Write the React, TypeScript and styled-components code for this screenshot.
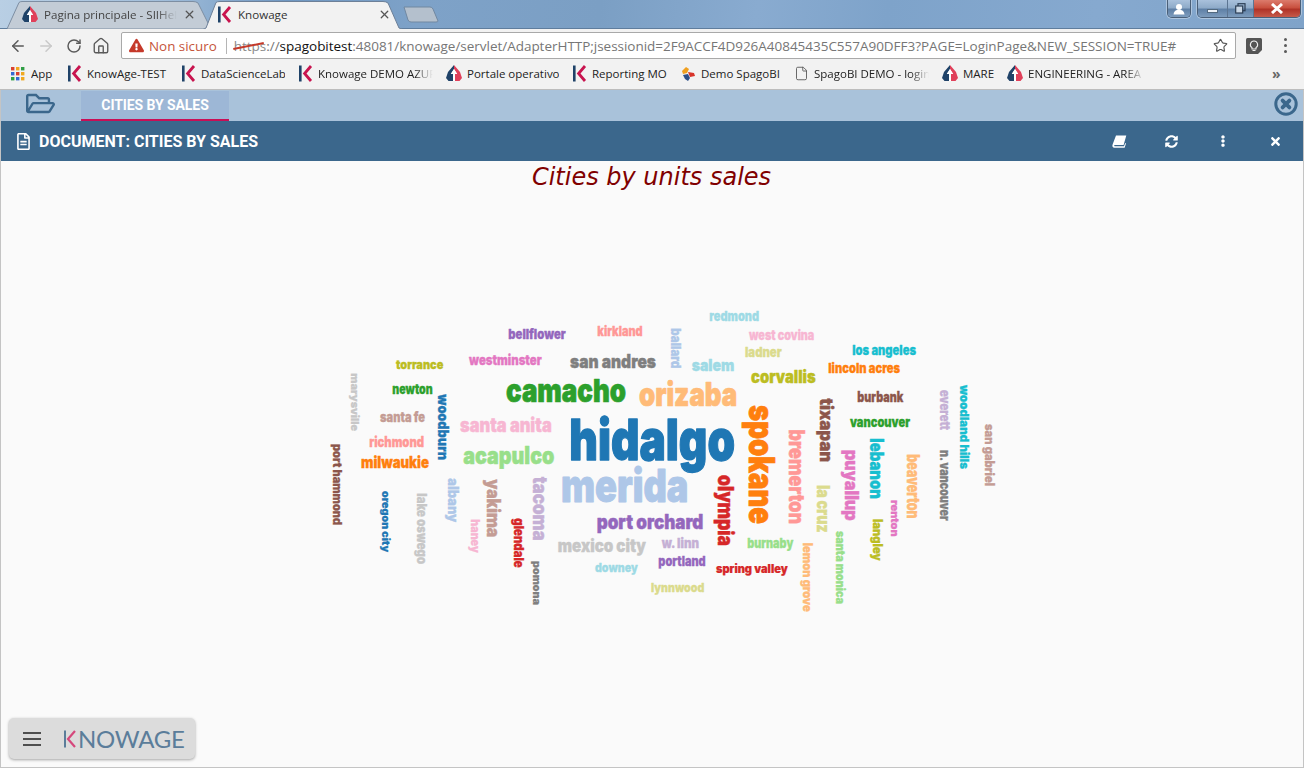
import React from "react";
import styled, { createGlobalStyle } from "styled-components";
import { ArrowLeft, ArrowRight, RotateCw, Home, Star, File as FileIcon, X } from "lucide-react";
import { FaRegFolderOpen, FaRegFileAlt, FaSyncAlt, FaEllipsisV, FaTimes, FaExclamationTriangle } from "react-icons/fa";

const Global = createGlobalStyle`
  html, body { margin: 0; padding: 0; background: #fafafa; overflow: hidden; }
  body { font-family: "Open Sans", "Liberation Sans", sans-serif; }
  * { box-sizing: border-box; }
`;

const Page = styled.div`
  width: 1304px; height: 768px; display: flex; flex-direction: column; overflow: hidden;
`;

/* ---------- browser chrome ---------- */
const TabStrip = styled.div`
  height: 29px; flex: none; display: flex; align-items: flex-end; padding-left: 7px; position: relative;
  background: linear-gradient(97deg, #b9cfe4 0%, #a3bfdb 12%, #6f97c1 22%, #7ea2c8 32%, #7b9fc4 46%, #89abd0 58%, #7ea3ca 68%, #86a9cf 84%, #7fa3c9 100%);
  border-bottom: 1px solid #5f7d9d;
`;
const TabShell = styled.div<{ $w: number; $active?: boolean }>`
  width: ${p => p.$w}px; height: 28px; position: relative; display: flex; align-items: center;
  padding: ${p => (p.$active ? "0 12px 1px 14px" : "0 19px 1px 15px")}; gap: 6px; flex: none; margin-bottom: -1px;
  margin-left: ${p => (p.$active ? "-12px" : "0")};
  font-size: 12px; color: ${p => (p.$active ? "#333" : "#444")};
  z-index: ${p => (p.$active ? 2 : 1)};
`;
const TabShape = styled.svg`
  position: absolute; inset: 0; width: 100%; height: 100%; z-index: -1;
`;
const TabTitle = styled.span<{ $fade?: boolean }>`
  flex: 1; white-space: nowrap; overflow: hidden; font-family: "Open Sans", sans-serif; font-size: 11.6px;
  ${p => p.$fade && "mask-image: linear-gradient(90deg, #000 85%, transparent 100%);"}
`;
const NewTab = styled.svg`
  width: 36px; height: 17px; flex: none; margin: 0 0 5px 0;
`;
const WindowControls = styled.div`
  position: absolute; top: 0; right: 3px; display: flex; gap: 6px; align-items: flex-start;
`;
const CtrlGroup = styled.div`
  display: flex; height: 18px; border: 1px solid #4a5f78; border-top: none; border-radius: 0 0 5px 5px; overflow: hidden;
  box-shadow: 0 0 0 1px rgba(255,255,255,.35);
`;
const Ctrl = styled.div<{ $w: number; $red?: boolean }>`
  width: ${p => p.$w}px; display: flex; align-items: center; justify-content: center;
  background: ${p => p.$red
    ? "linear-gradient(#dc7b6c 0%, #c9503f 45%, #b03327 55%, #c65a4a 100%)"
    : "linear-gradient(#a9c1dc 0%, #8fabc9 45%, #5f80a6 55%, #7d9cbd 100%)"};
  & + & { border-left: 1px solid #5c7592; }
`;
const MinBar = styled.div`
  width: 11px; height: 4px; margin-top: 5px; background: #eef3f8; border: 1px solid #52697f;
`;

const Toolbar = styled.div`
  height: 31px; flex: none; background: #f2f2f2; display: flex; align-items: center; padding: 2px 0 0 8px;
`;
const NavBtn = styled.div<{ $w: number }>`
  width: ${p => p.$w}px; display: flex; align-items: center; justify-content: center; flex: none;
`;
const UrlBox = styled.div`
  width: 1115px; height: 27px; margin-left: 2px; flex: none; background: #fff; border: 1px solid #a9a9a9; border-radius: 2px;
  display: flex; align-items: center; padding: 0 7px; font-size: 13.5px; color: #767676; white-space: nowrap;
`;
const NotSecure = styled.span`
  color: #c5553a; margin-left: 5px; font-size: 13.4px; font-family: "Open Sans", sans-serif;
`;
const UrlSep = styled.span`
  width: 1px; height: 16px; background: #b5b5b5; margin: 0 7px 0 9px; flex: none;
`;
const Https = styled.span`
  position: relative; color: #8a8a8a;
  &::after {
    content: ""; position: absolute; left: -1px; right: 2px; top: 8px; height: 1.5px; background: #c5392a; transform: rotate(-11deg);
  }
`;
const UrlText = styled.span`
  flex: 1; font-family: "Open Sans", sans-serif; letter-spacing: -0.025px;
`;
const Host = styled.span`
  color: #111;
`;
const ExtIcon = styled.svg`
  width: 16px; height: 16px; margin-left: 10px; flex: none;
`;
const MenuDots = styled.div`
  display: flex; flex-direction: column; gap: 3px; margin-left: 22px;
`;
const Dot = styled.span`
  width: 3px; height: 3px; border-radius: 50%; background: #5a5a5a;
`;

const Bookmarks = styled.div`
  height: 30px; flex: none; background: #f2f2f2; display: flex; align-items: center; padding: 0 0 2px 11px;
  border-bottom: 1px solid #bdbdbd;
  font-family: "Open Sans", sans-serif; font-size: 11.5px; color: #222;
`;
const Bookmark = styled.div<{ $w: number }>`
  width: ${p => p.$w}px; flex: none; display: flex; align-items: center; gap: 5px; padding-right: 13px; overflow: hidden; white-space: nowrap;
`;
const BookmarkLabel = styled.span<{ $fade?: boolean }>`
  flex: 1; overflow: hidden;
  ${p => p.$fade && "mask-image: linear-gradient(90deg, #000 84%, transparent 100%);"}
`;
const Chevrons = styled.span`
  margin-left: 115px; color: #666; font-size: 14px; font-weight: 700; line-height: 1;
`;

/* ---------- application ---------- */
const AppFrame = styled.div`
  flex: 1; display: flex; flex-direction: column; border-left: 1px solid #c4c4c4; border-right: 1px solid #c4c4c4;
  border-bottom: 1px solid #c4c4c4; position: relative; min-height: 0;
`;
const DocTabs = styled.div`
  height: 31px; flex: none; background: #a9c2da; display: flex; padding-top: 1px; align-items: stretch;
`;
const FolderBtn = styled.div`
  width: 80px; flex: none; display: flex; align-items: flex-start; padding: 0 0 0 25px; color: #3b678c;
`;
const DocTab = styled.div`
  width: 148px; flex: none; background: #9db7d6; border-bottom: 2px solid #c90f56; color: #fff;
  font-family: Roboto, sans-serif; font-weight: 700; font-size: 14px; letter-spacing: -0.08px;
  display: flex; align-items: center; justify-content: center; padding-bottom: 1px;
`;
const CloseAll = styled.svg`
  width: 24px; height: 24px; margin: 1px 5px 0 auto; flex: none;
`;
const DocHeader = styled.div`
  height: 40px; flex: none; background: #3b678c; color: #fff; display: flex; align-items: center; padding: 0 2px 0 14px;
`;
const DocTitle = styled.div`
  font-family: Roboto, sans-serif; font-weight: 700; font-size: 16px; margin-left: 7px; letter-spacing: 0; white-space: nowrap;
`;
const HeaderActions = styled.div`
  margin-left: auto; display: flex; align-items: center;
`;
const HeaderBtn = styled.div`
  width: 52px; display: flex; justify-content: center; align-items: center; color: #fff;
`;
const Content = styled.div`
  flex: 1; background: #fafafa; display: flex; flex-direction: column; min-height: 0;
`;
const ChartTitle = styled.div`
  height: 32px; flex: none; text-align: center; color: #800000; padding: 0 1px 0 0;
  font-family: "DejaVu Sans", Verdana, sans-serif; font-style: italic; font-size: 24px; line-height: 33px;
`;
const Cloud = styled.svg`
  display: block; width: 1302px; height: 574px; flex: none;
`;
const WordText = styled.text<{ $size: number; $color: string }>`
  font-family: Inter, "Liberation Sans", Arial, sans-serif; font-weight: 900;
  font-size: ${p => p.$size}px; fill: ${p => p.$color}; stroke: ${p => p.$color};
  stroke-width: ${p => p.$size * 0.022}px; stroke-linejoin: round;
`;
const FloatMenu = styled.div`
  position: absolute; left: 8px; bottom: 8px; width: 186px; height: 41px; background: #dcdcdc; border-radius: 5px;
  box-shadow: 0 1px 3px rgba(0,0,0,.35); display: flex; align-items: center; padding: 1px 0 0 14px;
`;
const Burger = styled.div`
  width: 18px; display: flex; flex-direction: column; gap: 3.6px; flex: none;
`;
const BurgerBar = styled.span`
  height: 2px; background: #4f4f4f; display: block;
`;
const BrandMark = styled.svg`
  width: 14px; height: 18px; margin-left: 22px; flex: none;
`;
const BrandText = styled.span`
  font-family: Lato, sans-serif; font-size: 24px; font-weight: 400; color: #5b7d9a; letter-spacing: -0.3px; line-height: 1; margin-left: 1px;
`;

/* ---------- small drawings ---------- */
const KLogo = ({ size = 15 }: { size?: number }) => (
  <svg width={size} height={size + 2} viewBox="0 0 15 17" style={{ flex: "none" }}>
    <rect x="1" y="0.5" width="2.6" height="16" fill="#1f4268" />
    <path d="M13 1 L6.6 8.5 L13 16" fill="none" stroke="#c8144f" strokeWidth="2.8" />
  </svg>
);
const ArrowLogo = () => (
  <svg width="16" height="17" viewBox="0 0 16 17" style={{ flex: "none" }}>
    <path d="M8 0 L2 7 L0 13 L2.5 16 L7 16 L7 9 L4.8 9 L8 4 Z" fill="#1f4268" />
    <path d="M8 0 L14 7 L16 13 L13.5 16 L9 16 L9 9 L11.2 9 L8 4 Z" fill="#e0405a" />
    <path d="M8 4 L11.2 9 L9 9 L9 16 L7 16 L7 9 L4.8 9 Z" fill="#fff" />
  </svg>
);
const SpagoLogo = () => (
  <svg width="16" height="16" viewBox="0 0 16 16" style={{ flex: "none" }}>
    <path d="M6 1 L9 3 L7 7 L3 8 L2 5 Z" fill="#f0a020" />
    <path d="M8 6 L14 7 L15 10 L10 11 Z" fill="#d8342a" />
    <path d="M3 9 L8 8 L10 12 L8 15 L5 13 Z" fill="#2d4f8a" />
  </svg>
);
const AppsGrid = () => {
  const c = ["#d9402f", "#f0a81e", "#2f9e44", "#3569d4", "#d9402f", "#f0a81e", "#2f9e44", "#3569d4", "#f0a81e"];
  return (
    <svg width="15" height="14" viewBox="0 0 15 14" style={{ flex: "none" }}>
      {c.map((f, i) => (
        <rect key={i} x={(i % 3) * 5} y={Math.floor(i / 3) * 5} width="3.4" height="3.4" fill={f} />
      ))}
    </svg>
  );
};
const BookIcon = () => (
  <svg width="15" height="13" viewBox="0 0 15 13">
    <path d="M4 0.5 L14.3 0.5 L11.6 10 L2.8 10 C2 10 1.8 11.3 2.8 11.3 L12 11.3 L13.2 8 L14 8.6 L12.6 12.7 L2.4 12.7 C0.6 12.7 0 11 0.6 9.5 Z" fill="#fff" />
  </svg>
);

type W = [string, number, number, number, number, string];
/* horizontal: text, left, right, baseline, ascender height, colour */
const H: W[] = [
  ["bellflower", 508.3, 565.7, 338.7, 10, "#9467bd"],
  ["kirkland", 597.3, 642.7, 336, 10, "#ff9896"],
  ["westminster", 469, 541.7, 365, 10.5, "#e377c2"],
  ["san andres", 570, 656, 367.7, 14, "#7f7f7f"],
  ["torrance", 396, 443.3, 369.3, 9.5, "#bcbd22"],
  ["camacho", 506, 626, 401.7, 24, "#2ca02c"],
  ["newton", 392.3, 432.7, 394.3, 10, "#2ca02c"],
  ["santa fe", 380, 425, 421.7, 10, "#c49c94"],
  ["santa anita", 460, 551.7, 431.7, 14.5, "#f7b6d2"],
  ["richmond", 369.3, 424, 446.7, 10.7, "#ff9896"],
  ["milwaukie", 361, 429, 468.3, 11.7, "#ff7f0e"],
  ["acapulco", 463.3, 554.3, 464.3, 18, "#98df8a"],
  ["hidalgo", 569.3, 735, 460, 43, "#1f77b4"],
  ["merida", 561, 688.3, 502.3, 34, "#aec7e8"],
  ["port orchard", 596.7, 703.3, 528.5, 15, "#9467bd"],
  ["mexico city", 557.7, 646, 552, 13, "#c7c7c7"],
  ["downey", 595, 637.7, 572, 9, "#9edae5"],
  ["w. linn", 661.7, 699, 547.7, 10, "#c5b0d5"],
  ["portland", 658.3, 705.7, 566, 10, "#9467bd"],
  ["lynnwood", 651, 704.3, 592, 9, "#dbdb8d"],
  ["spring valley", 716, 787.7, 573.3, 8.5, "#d62728"],
  ["burnaby", 747.3, 793.3, 548.3, 10, "#98df8a"],
  ["orizaba", 639, 737.3, 406, 25, "#ffbb78"],
  ["redmond", 709.3, 759, 321, 10, "#9edae5"],
  ["west covina", 749, 814.3, 340, 10, "#f7b6d2"],
  ["ladner", 745, 781.7, 357.3, 10, "#dbdb8d"],
  ["salem", 691.7, 734.3, 370.7, 12.5, "#9edae5"],
  ["corvallis", 751, 815.7, 383.3, 12.7, "#bcbd22"],
  ["los angeles", 852.3, 916, 355, 10, "#17becf"],
  ["lincoln acres", 828.3, 900, 372.7, 10, "#ff7f0e"],
  ["burbank", 857.3, 903.3, 401.7, 10.7, "#8c564b"],
  ["vancouver", 850, 910, 426.7, 10, "#2ca02c"],
];
/* vertical: text, baseline x, top, bottom, ascender height, colour */
const V: W[] = [
  ["marysville", 350.7, 373.3, 431, 8, "#c7c7c7"],
  ["woodburn", 438.3, 394.3, 460, 11, "#1f77b4"],
  ["port hammond", 333, 444, 525, 8.7, "#8c564b"],
  ["oregon city", 382, 491, 552.3, 7.5, "#1f77b4"],
  ["lake oswego", 417, 493.3, 564, 9.8, "#c7c7c7"],
  ["albany", 448, 478.3, 522.3, 11, "#aec7e8"],
  ["haney", 470.5, 519.3, 552.7, 9, "#f7b6d2"],
  ["yakima", 487, 479.3, 537.3, 14, "#c49c94"],
  ["tacoma", 533, 476.7, 540.7, 14.5, "#c5b0d5"],
  ["glendale", 514, 518.3, 567.7, 10, "#d62728"],
  ["pomona", 532.5, 561, 605, 7.5, "#7f7f7f"],
  ["ballard", 671, 328.3, 368.3, 10, "#aec7e8"],
  ["spokane", 749.3, 405, 524, 26.7, "#ff7f0e"],
  ["tixapan", 820, 398.3, 462.3, 14, "#8c564b"],
  ["bremerton", 789.3, 429.3, 524, 16.2, "#ff9896"],
  ["olympia", 718, 475, 546, 16, "#d62728"],
  ["la cruz", 817, 485, 532.7, 13.5, "#dbdb8d"],
  ["puyallup", 845, 450, 520.7, 14, "#e377c2"],
  ["lebanon", 870, 438.3, 499, 14, "#17becf"],
  ["beaverton", 907.3, 454.3, 518.7, 12.7, "#ffbb78"],
  ["renton", 891, 500, 536.7, 8.3, "#e377c2"],
  ["langley", 873, 519, 560.7, 9.7, "#bcbd22"],
  ["santa monica", 836, 531, 604, 9.2, "#98df8a"],
  ["lemon grove", 802.5, 542.7, 611.7, 9.5, "#ffbb78"],
  ["n. vancouver", 939.5, 450, 520.7, 9.8, "#7f7f7f"],
  ["everett", 939.5, 390, 430, 9.8, "#c5b0d5"],
  ["woodland hills", 959.5, 385, 469, 9.2, "#17becf"],
  ["san gabriel", 984.5, 424, 486, 9.7, "#c49c94"],
];

const Word = ({ w, vertical }: { w: W; vertical?: boolean }) => {
  const [text, a, b, c, asc, color] = w;
  const size = asc / 0.756;
  const len = vertical ? c - b : b - a;
  const transform = vertical ? `translate(${a} ${b}) rotate(90)` : `translate(${a} ${c})`;
  return (
    <WordText $size={size} $color={color} transform={transform} textLength={len} lengthAdjust="spacingAndGlyphs">
      {text}
    </WordText>
  );
};

const bookmarks: { w: number; icon: React.ReactNode; label: string; fade?: boolean }[] = [
  { w: 56, icon: <AppsGrid />, label: "App" },
  { w: 114, icon: <KLogo />, label: "KnowAge-TEST" },
  { w: 117, icon: <KLogo />, label: "DataScienceLab" },
  { w: 148, icon: <KLogo />, label: "Knowage DEMO AZURE", fade: true },
  { w: 126, icon: <ArrowLogo />, label: "Portale operativo" },
  { w: 108, icon: <KLogo />, label: "Reporting MO" },
  { w: 114, icon: <SpagoLogo />, label: "Demo SpagoBI" },
  { w: 148, icon: <FileIcon size={15} color="#555" strokeWidth={1.4} />, label: "SpagoBI DEMO - login", fade: true },
  { w: 65, icon: <ArrowLogo />, label: "MARE" },
  { w: 150, icon: <ArrowLogo />, label: "ENGINEERING - AREA SVILUPPO", fade: true },
];

export default function App() {
  return (
    <Page>
      <Global />
      <TabStrip>
        <TabShell $w={208}>
          <TabShape viewBox="0 0 208 28" preserveAspectRatio="none">
            <path d="M0 28 L12 1.5 Q13 0.5 15 0.5 L186 0.5 Q189 0.5 191 2 L204 28 Z" fill="#c3ccd6" stroke="#7d8ea2" />
          </TabShape>
          <ArrowLogo />
          <TabTitle $fade>Pagina principale - SIIHelp</TabTitle>
          <X size={13} strokeWidth={2.4} color="#555" />
        </TabShell>
        <TabShell $w={200} $active>
          <TabShape viewBox="0 0 200 28" preserveAspectRatio="none">
            <path d="M0 28.5 L3 27 L13 1.5 Q14 0.5 17 0.5 L180 0.5 Q183 0.5 185 2 L196 27 L200 28.5 Z" fill="#f2f2f2" stroke="#6d8098" />
          </TabShape>
          <KLogo />
          <TabTitle>Knowage</TabTitle>
          <X size={13} strokeWidth={2.4} color="#555" />
        </TabShell>
        <NewTab viewBox="0 0 36 17">
          <path d="M1 1 L27 1 Q29 1 30 3 L35 15 Q35 16 33 16 L8 16 Q6 16 5 14 Z" fill="#b4c0cd" stroke="#7188a1" />
        </NewTab>
        <WindowControls>
          <CtrlGroup>
            <Ctrl $w={22}>
              <svg width="12" height="12" viewBox="0 0 12 12"><circle cx="6" cy="4" r="3" fill="#fff" /><path d="M0.5 11.5 Q1 7.5 4 7 L8 7 Q11 7.5 11.5 11.5 Z" fill="#fff" /></svg>
            </Ctrl>
          </CtrlGroup>
          <CtrlGroup>
            <Ctrl $w={29}><MinBar /></Ctrl>
            <Ctrl $w={26}>
              <svg width="11" height="11" viewBox="0 0 11 11"><rect x="3" y="0.7" width="7" height="7" fill="none" stroke="#2d3f55" strokeWidth="1.2" /><rect x="0.7" y="3" width="7" height="7" fill="#c9d7e6" stroke="#2d3f55" strokeWidth="1.2" /></svg>
            </Ctrl>
            <Ctrl $w={47} $red>
              <svg width="14" height="11" viewBox="0 0 14 11"><path d="M2 1 L12 10 M12 1 L2 10" stroke="#fff" strokeWidth="3" /></svg>
            </Ctrl>
          </CtrlGroup>
        </WindowControls>
      </TabStrip>

      <Toolbar>
        <NavBtn $w={19}><ArrowLeft size={18} color="#5a5a5a" strokeWidth={2} /></NavBtn>
        <NavBtn $w={38}><ArrowRight size={18} color="#c9c9c9" strokeWidth={2} /></NavBtn>
        <NavBtn $w={18}><RotateCw size={16} color="#5a5a5a" strokeWidth={2.2} /></NavBtn>
        <NavBtn $w={36}><Home size={18} color="#5a5a5a" strokeWidth={1.8} /></NavBtn>
        <UrlBox>
          <FaExclamationTriangle size={15} color="#c5392a" />
          <NotSecure>Non sicuro</NotSecure>
          <UrlSep />
          <UrlText>
            <Https>https</Https>://<Host>spagobitest</Host>:48081/knowage/servlet/AdapterHTTP;jsessionid=2F9ACCF4D926A40845435C557A90DFF3?PAGE=LoginPage&amp;NEW_SESSION=TRUE#
          </UrlText>
          <Star size={15} color="#555" strokeWidth={1.8} />
        </UrlBox>
        <ExtIcon viewBox="0 0 16 16">
          <path d="M0 1.5 Q0 0 1.5 0 L14.5 0 Q16 0 16 1.5 L16 12 L12 16 L1.5 16 Q0 16 0 14.5 Z" fill="#555" />
          <path d="M8 3 A3.6 3.6 0 0 1 10 9.6 L10 11 L6 11 L6 9.6 A3.6 3.6 0 0 1 8 3 Z M6.5 12.5 L9.5 12.5" fill="none" stroke="#f0f0f0" strokeWidth="1.1" />
        </ExtIcon>
        <MenuDots><Dot /><Dot /><Dot /></MenuDots>
      </Toolbar>

      <Bookmarks>
        {bookmarks.map(b => (
          <Bookmark key={b.label} $w={b.w}>
            {b.icon}
            <BookmarkLabel $fade={b.fade}>{b.label}</BookmarkLabel>
          </Bookmark>
        ))}
        <Chevrons>»</Chevrons>
      </Bookmarks>

      <AppFrame>
        <DocTabs>
          <FolderBtn><FaRegFolderOpen size={29} style={{ marginTop: -2 }} /></FolderBtn>
          <DocTab>CITIES BY SALES</DocTab>
          <CloseAll viewBox="0 0 24 24">
            <circle cx="12" cy="12" r="10.2" fill="none" stroke="#3b678c" strokeWidth="3" />
            <path d="M8.6 8.6 L15.4 15.4 M15.4 8.6 L8.6 15.4" stroke="#3b678c" strokeWidth="3.8" strokeLinecap="round" />
          </CloseAll>
        </DocTabs>
        <DocHeader>
          <FaRegFileAlt size={17} />
          <DocTitle>DOCUMENT: CITIES BY SALES</DocTitle>
          <HeaderActions>
            <HeaderBtn><BookIcon /></HeaderBtn>
            <HeaderBtn><FaSyncAlt size={13} /></HeaderBtn>
            <HeaderBtn><FaEllipsisV size={12} /></HeaderBtn>
            <HeaderBtn><FaTimes size={13} /></HeaderBtn>
          </HeaderActions>
        </DocHeader>
        <Content>
          <ChartTitle>Cities by units sales</ChartTitle>
          <Cloud viewBox="1 193 1302 574">
            {H.map(w => <Word key={w[0]} w={w} />)}
            {V.map(w => <Word key={w[0]} vertical w={w} />)}
          </Cloud>
        </Content>
        <FloatMenu>
          <Burger><BurgerBar /><BurgerBar /><BurgerBar /></Burger>
          <BrandMark viewBox="0 0 14 18">
            <rect x="1" y="0.5" width="2" height="17" fill="#5b7d9a" />
            <path d="M12 1 L5 9 L12 17" fill="none" stroke="#d5487c" strokeWidth="2.2" />
          </BrandMark>
          <BrandText>NOWAGE</BrandText>
        </FloatMenu>
      </AppFrame>
    </Page>
  );
}
